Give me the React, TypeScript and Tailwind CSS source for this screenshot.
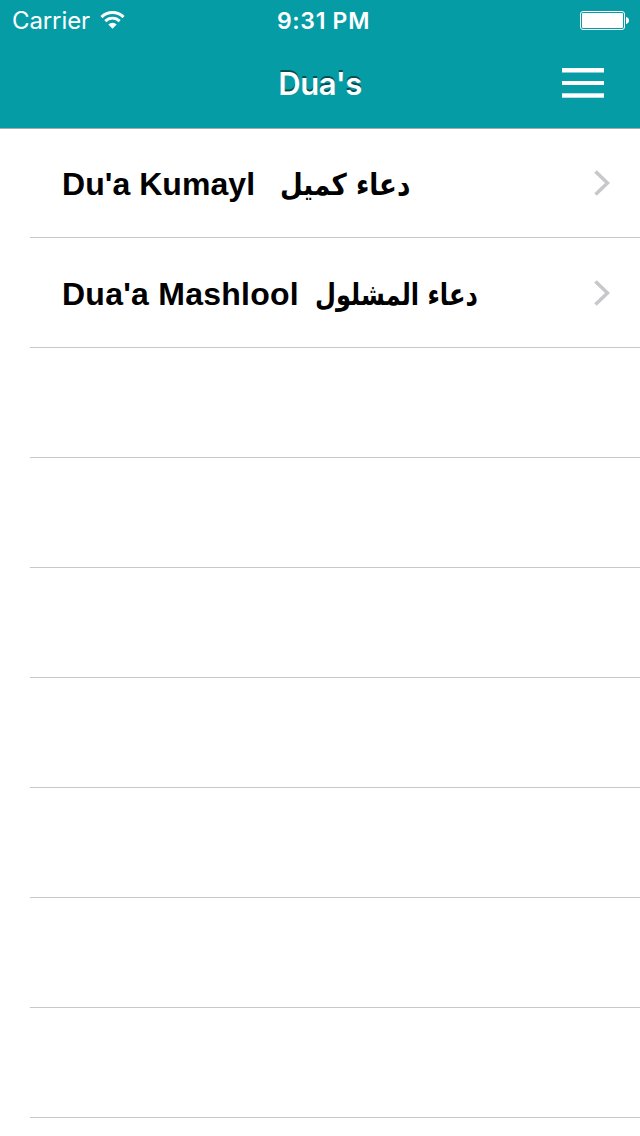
type Dua = {
  name: string;
  arabic: string;
  nameClass: string;
  arabicClass: string;
};

const duas: Dua[] = [
  {
    name: "Du'a Kumayl",
    arabic: "دعاء كميل",
    nameClass: "w-[218px] tracking-[0.05px]",
    arabicClass: "scale-x-[0.872]",
  },
  {
    name: "Dua'a Mashlool",
    arabic: "دعاء المشلول",
    nameClass: "w-[253px] tracking-[0.25px]",
    arabicClass: "scale-x-[0.805]",
  },
];

const emptyRows = [1, 2, 3, 4, 5, 6, 7];

function WifiIcon() {
  return (
    <svg viewBox="0 0 26 20" className="h-5 w-[26px]" fill="none">
      <path d="M1.500 7.100a15.500 15.500 0 0 1 22 0" stroke="currentColor" strokeWidth="3.100" />
      <path d="M5.300 11.100a10.200 10.200 0 0 1 14.400 0" stroke="currentColor" strokeWidth="2.900" />
      <path d="M8.300 14.500a5.900 5.900 0 0 1 8.400 0l-4.200 4.300z" fill="currentColor" />
    </svg>
  );
}

function BatteryIcon() {
  return (
    <svg viewBox="0 0 50 20" className="h-5 w-[50px]" fill="none">
      <rect x="0.5" y="1.500" width="44" height="18" rx="2.5" stroke="currentColor" />
      <rect x="2" y="3" width="41" height="15" rx="1" fill="currentColor" />
      <path d="M46 7c2 .4 3 1.600 3 3.500s-1 3.100-3 3.500z" fill="currentColor" />
    </svg>
  );
}

function MenuIcon() {
  return (
    <svg viewBox="0 0 42 30" className="h-[30px] w-[42px]" fill="currentColor">
      <rect width="42" height="4.500" />
      <rect y="13" width="42" height="4" />
      <rect y="25.300" width="42" height="4.400" />
    </svg>
  );
}

function Chevron() {
  return (
    <svg viewBox="0 0 16 26" className="h-[26px] w-4" fill="none">
      <path d="M1.500 1.500L13.500 13L1.500 24.500" stroke="#c7c7cc" strokeWidth="3.600" />
    </svg>
  );
}

function Header() {
  return (
    <header className="h-[129px] border-b border-[#a5a9ab] bg-[#069ca5] font-['Inter',sans-serif] text-white">
      <div className="grid h-10 grid-cols-3 items-center pr-[10px] pl-3">
        <div className="flex items-center gap-[10px]">
          <span className="pt-[2px] text-[24px] leading-[38px] tracking-[-0.1px]">Carrier</span>
          <WifiIcon />
        </div>
        <span className="pt-[2px] pl-[5px] text-center text-[23px] leading-[38px] font-semibold tracking-[0.7px] whitespace-nowrap">9:31 PM</span>
        <div className="flex justify-end">
          <BatteryIcon />
        </div>
      </div>
      <div className="grid h-[86px] grid-cols-3 items-center px-9">
        <span />
        <h1 className="pt-[2px] text-center text-[31px] leading-[84px] font-semibold tracking-[-0.4px] [text-shadow:0_-2px_0_#044f54]">Dua's</h1>
        <button className="flex justify-end">
          <MenuIcon />
        </button>
      </div>
    </header>
  );
}

export default function App() {
  return (
    <div className="h-[1136px] w-[640px] overflow-hidden bg-white">
      <Header />
      <ul className="-mt-px pl-[30px]">
        {duas.map((d) => (
          <li key={d.name} className="flex h-[110px] items-center border-b border-[#c8c7cc] pr-[30px] pl-8">
            <span className={`shrink-0 pt-[2px] font-['Liberation_Sans',Arial,sans-serif] text-[32px] font-bold whitespace-nowrap text-black ${d.nameClass}`}>
              {d.name}
            </span>
            <span dir="rtl" className={`origin-left pt-[3px] font-['DejaVu_Sans',sans-serif] text-[30px] font-bold whitespace-nowrap text-black ${d.arabicClass}`}>
              {d.arabic}
            </span>
            <span className="ml-auto">
              <Chevron />
            </span>
          </li>
        ))}
        {emptyRows.map((n) => (
          <li key={n} className="h-[110px] border-b border-[#c8c7cc]" />
        ))}
      </ul>
    </div>
  );
}
